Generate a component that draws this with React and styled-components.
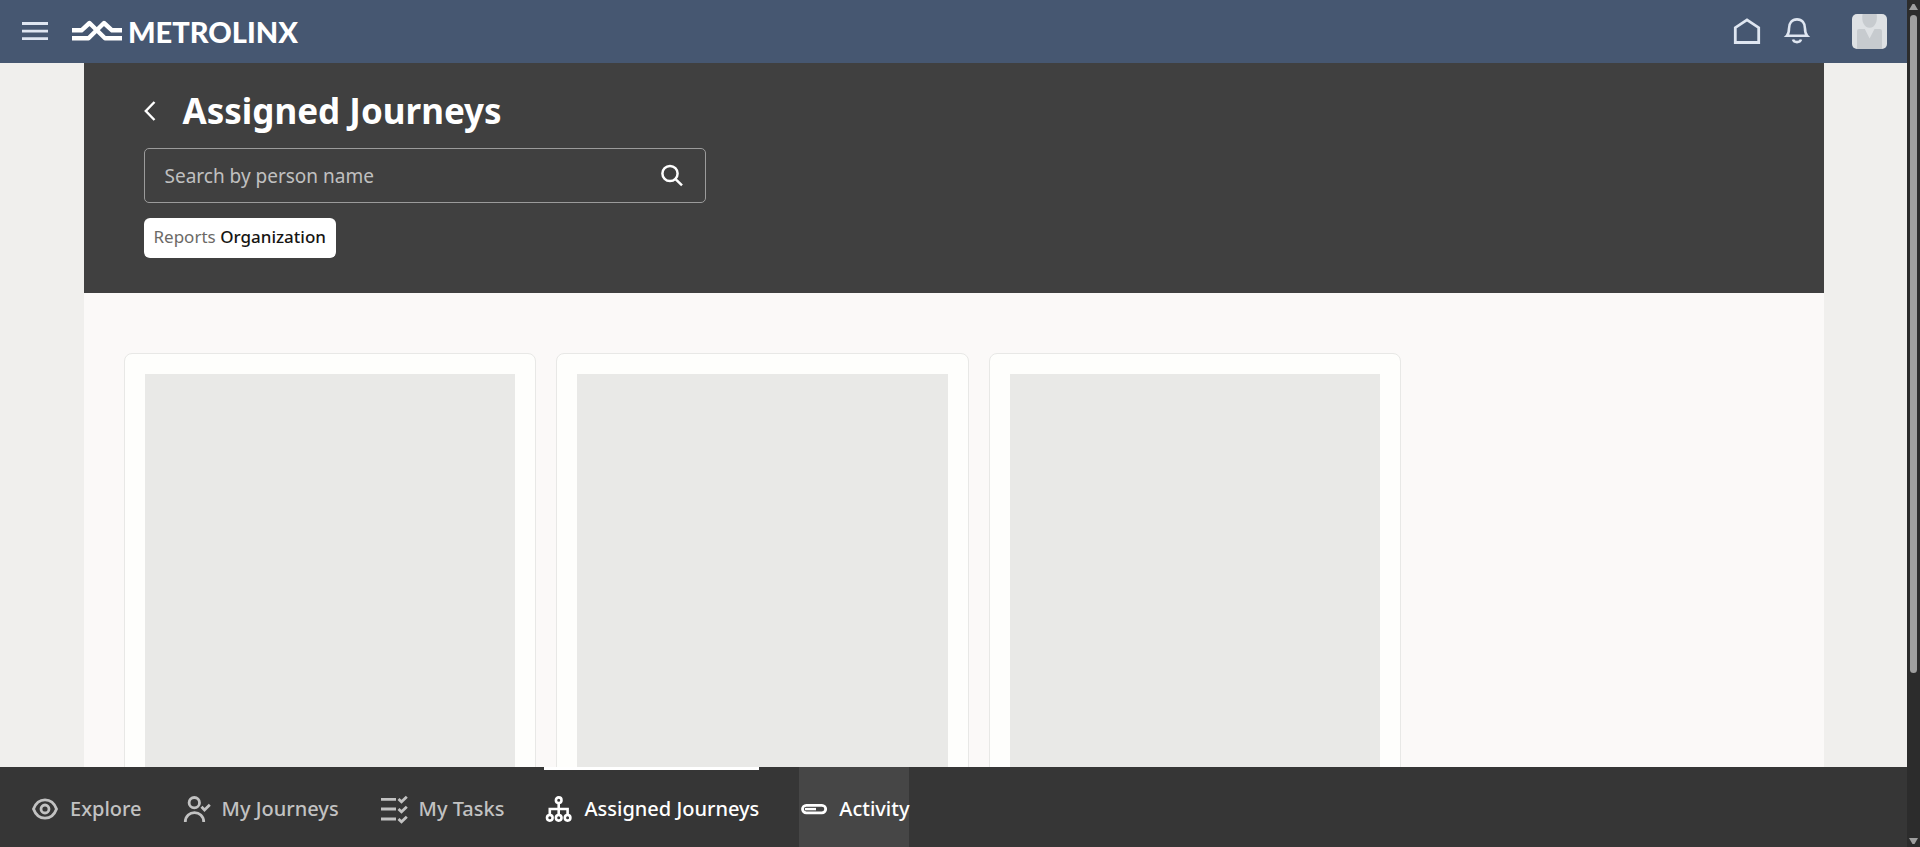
import React from "react";
import styled, { createGlobalStyle } from "styled-components";

const GlobalStyle = createGlobalStyle`
  *, *::before, *::after { box-sizing: border-box; }
  body {
    margin: 0;
    background: #f0efed;
    font-family: "Noto Sans", "Open Sans", sans-serif;
    color: #161513;
  }
  button, input { font: inherit; color: inherit; }
`;

const Shell = styled.div`
  display: flex;
  height: 100vh;
`;

const Page = styled.div`
  flex: 1;
  min-width: 0;
  display: flex;
  flex-direction: column;
`;

const TopBar = styled.header`
  flex: none;
  display: flex;
  align-items: center;
  gap: 20px;
  height: 63px;
  padding: 0 20px;
  background: #465771;
  color: #dfe6f1;
`;

const IconButton = styled.button`
  display: flex;
  padding: 0;
  border: 0;
  background: none;
  cursor: pointer;
`;

const Brand = styled.a`
  display: flex;
  align-items: center;
  gap: 6px;
  margin-right: auto;
  padding: 0 2px;
  color: #fff;
  text-decoration: none;
  font: 900 29px/30px Lato, sans-serif;
`;

const AvatarButton = styled(IconButton)`
  margin-left: 20px;
  border-radius: 5px;
  overflow: hidden;
`;

const Main = styled.main`
  flex: 1;
  min-height: 0;
  overflow-y: auto;
  scrollbar-width: none;
`;

const Content = styled.div`
  max-width: 1740px;
  margin: 0 auto;
  background: #fbf9f8;
`;

const Hero = styled.section`
  display: flex;
  flex-direction: column;
  align-items: flex-start;
  padding: 24px 60px 35px;
  background: #404040;
  color: #fff;
`;

const TitleRow = styled.div`
  display: flex;
  align-items: center;
  gap: 26px;
  height: 48px;
  margin-bottom: 13px;
`;

const Title = styled.h1`
  margin: 0;
  font-size: 35px;
  line-height: 48px;
  font-weight: 700;
`;

const SearchBox = styled.form`
  display: flex;
  align-items: center;
  width: 100%;
  max-width: 562px;
  height: 55px;
  margin-bottom: 15px;
  padding: 0 20px;
  border: 1px solid #9b9b9b;
  border-radius: 5px;
`;

const SearchInput = styled.input`
  flex: 1;
  min-width: 0;
  padding: 0;
  border: 0;
  outline: 0;
  background: none;
  font-size: 19px;
  line-height: 28px;

  &::placeholder { color: #c0c0c0; opacity: 1; }
`;

const Chip = styled.button`
  height: 40px;
  padding: 0 10px 2px;
  border: 0;
  border-radius: 6px;
  background: #fff;
  color: #6b6966;
  font-size: 17px;
  line-height: 24px;
  cursor: pointer;

  strong { color: #161513; font-weight: 500; }
`;

const CardGrid = styled.section`
  padding: 60px 40px;
`;

const Cards = styled.ul`
  display: grid;
  grid-template-columns: repeat(3, 1fr);
  gap: 20px;
  max-width: 1278px;
  margin: 0;
  padding: 0;
  list-style: none;
`;

const Card = styled.li`
  padding: 20px;
  border: 1px solid #e8e8e6;
  border-radius: 8px;
  background: #fefefc;
`;

const Skeleton = styled.div`
  height: 560px;
  background: #e9e9e7;
`;

const BottomNav = styled.nav`
  flex: none;
  display: flex;
  gap: 40px;
  height: 80px;
  padding: 0 30px;
  background: #363636;
`;

const NavItem = styled.a`
  display: flex;
  align-items: center;
  gap: 10px;
  padding-top: 3px;
  box-shadow: ${(p) => (p.$current ? "inset 0 3px #fff" : "none")};
  background: ${(p) => (p.$hovered ? "#464646" : "none")};
  color: ${(p) => (p.$current || p.$hovered ? "#fff" : "#c2c2c2")};
  font-size: 20px;
  line-height: 28px;
  font-weight: 500;
  text-decoration: none;
  white-space: nowrap;
`;

const ScrollBar = styled.div`
  flex: none;
  display: flex;
  flex-direction: column;
  align-items: center;
  justify-content: space-between;
  width: 13px;
  padding: 4px 0 3px;
  background: #2c2c2c;
`;

const ScrollTrack = styled.div`
  flex: 1;
  width: 7px;
  margin: 5px 0 1px;
`;

const ScrollThumb = styled.div`
  height: 80%;
  border-radius: 4px;
  background: #9f9f9f;
`;

const Svg = ({ w = 30, h = 30, sw = 2.8, children, ...rest }) => (
  <svg width={w} height={h} viewBox={`0 0 ${w} ${h}`} fill="none" stroke="currentColor" strokeWidth={sw} aria-hidden="true" {...rest}>
    {children}
  </svg>
);

const MenuIcon = () => (
  <Svg h={31}><path d="M2 7.5H28M2 15.2H28M2 22.6H28" /></Svg>
);

const LogoMark = () => (
  <Svg w={50} h={31} sw={4.4} strokeLinejoin="round">
    <path d="M0 14.3H9.5L17.5 7L33 22.3H50" />
    <path d="M50 14.3H40L32 7L16.5 22.3H0" />
  </Svg>
);

const HomeIcon = () => (
  <Svg h={31}><path d="M3.3 26.5V11.7L15 3.9L26.7 11.7V26.5Z" /></Svg>
);

const BellIcon = () => (
  <Svg h={31} sw={2.6}>
    <path d="M4.8 19.8C6.5 18 7 16 7 12.5C7 7 10 3.4 15 3.4S23 7 23 12.5C23 16 23.5 18 25.2 19.8Z" />
    <path d="M11 23.5C12 27 18 27 19 23.5" />
  </Svg>
);

const Avatar = () => (
  <Svg w={35} h={35} stroke="none">
    <path d="M0 0H35V35H0Z" fill="#dee1e4" />
    <path d="M10.6 0H24.6C26 7 23 13.8 17.6 13.8S9 7 10.6 0Z" fill="#c7cbcf" />
    <path d="M5 35V17Q5 15 7 15H12.8L17.6 24.5L22.5 15H28Q30 15 30 17V35Z" fill="#c7cbcf" />
  </Svg>
);

const BackIcon = () => (
  <Svg w={13} h={24} sw={2.4}><path d="M10.5 3L1.8 12L10.5 21" /></Svg>
);

const SearchIcon = () => (
  <Svg w={24} h={24} sw={2.5}>
    <circle cx="9" cy="9.5" r="7.6" /><path d="M14.3 14.8L21 21.3" />
  </Svg>
);

const EyeIcon = () => (
  <Svg>
    <path d="M3.5 15C8 2.8 22 2.8 26.5 15C22 27.2 8 27.2 3.5 15Z" />
    <circle cx="15" cy="15" r="4" />
  </Svg>
);

const PersonCheckIcon = () => (
  <Svg>
    <circle cx="12.3" cy="8.7" r="5.2" />
    <path d="M3.3 28C3.3 15.5 21.7 15.5 21.7 28" />
    <path d="M19.5 12.8L22.5 16L27.8 10.8" />
  </Svg>
);

const TasksIcon = () => (
  <Svg>
    <path d="M2 5.3H17M2 15H17M2 25H17" />
    <path d="M19.5 5L22.5 7.8L27.8 2.8M19.5 15L22.5 17.8L27.8 12.8M19.5 25L22.5 27.8L27.8 22.8" />
  </Svg>
);

const OrgIcon = () => (
  <Svg sw={2.6}>
    <circle cx="14.7" cy="6.2" r="2.8" />
    <circle cx="5.8" cy="23.8" r="2.8" />
    <circle cx="14.7" cy="23.8" r="2.8" />
    <circle cx="23.6" cy="23.8" r="2.8" />
    <path d="M14.7 9V21M5.8 21V15H23.6V21" />
  </Svg>
);

const ActivityIcon = () => (
  <Svg>
    <rect x="3.5" y="11.3" width="23.2" height="7.6" rx="3.8" />
    <path d="M6 15.1H17" strokeWidth="2.4" />
  </Svg>
);

const Arrow = ({ down }) => (
  <Svg w={9} h={6} stroke="none">
    <path d={down ? "M0 0H9L5.5 6H3.5Z" : "M0 6H9L5.5 0H3.5Z"} fill="#9f9f9f" />
  </Svg>
);

const NAV = [
  { label: "Explore", icon: EyeIcon },
  { label: "My Journeys", icon: PersonCheckIcon },
  { label: "My Tasks", icon: TasksIcon },
  { label: "Assigned Journeys", icon: OrgIcon, current: true },
  { label: "Activity", icon: ActivityIcon, hovered: true },
];

export default function App() {
  return (
    <Shell>
      <GlobalStyle />
      <Page>
        <TopBar>
          <IconButton type="button" aria-label="Navigation menu"><MenuIcon /></IconButton>
          <Brand href="#home"><LogoMark />METROLINX</Brand>
          <IconButton type="button" aria-label="Home"><HomeIcon /></IconButton>
          <IconButton type="button" aria-label="Notifications"><BellIcon /></IconButton>
          <AvatarButton type="button" aria-label="Account"><Avatar /></AvatarButton>
        </TopBar>
        <Main>
          <Content>
            <Hero>
              <TitleRow>
                <IconButton type="button" aria-label="Back"><BackIcon /></IconButton>
                <Title>Assigned Journeys</Title>
              </TitleRow>
              <SearchBox role="search" onSubmit={(e) => e.preventDefault()}>
                <SearchInput type="text" aria-label="Search by person name" placeholder="Search by person name" />
                <IconButton type="submit" aria-label="Search"><SearchIcon /></IconButton>
              </SearchBox>
              <Chip type="button">Reports <strong>Organization</strong></Chip>
            </Hero>
            <CardGrid aria-label="Loading journeys" aria-busy="true">
              <Cards>
                {[1, 2, 3].map((n) => (
                  <Card key={n}><Skeleton /></Card>
                ))}
              </Cards>
            </CardGrid>
          </Content>
        </Main>
        <BottomNav aria-label="Journeys">
          {NAV.map(({ label, icon: Icon, current, hovered }) => (
            <NavItem key={label} href="#" $current={current} $hovered={hovered} aria-current={current ? "page" : undefined}>
              <Icon />{label}
            </NavItem>
          ))}
        </BottomNav>
      </Page>
      <ScrollBar aria-hidden="true">
        <Arrow />
        <ScrollTrack><ScrollThumb /></ScrollTrack>
        <Arrow down />
      </ScrollBar>
    </Shell>
  );
}
